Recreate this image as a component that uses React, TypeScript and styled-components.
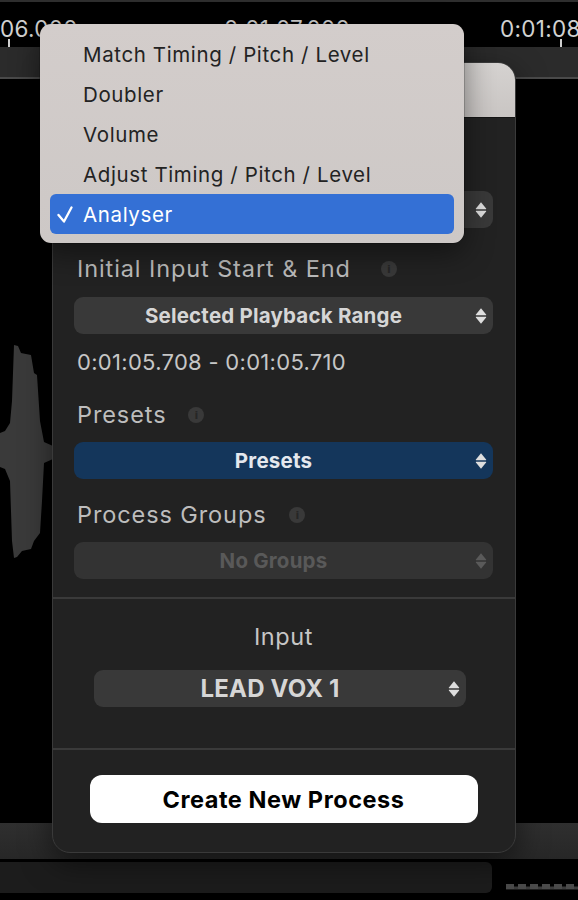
import React from "react";
import styled, { createGlobalStyle } from "styled-components";

const GlobalStyle = createGlobalStyle`
  html, body { margin: 0; padding: 0; background: #000; }
  body { font-family: "Inter", "Liberation Sans", sans-serif; -webkit-font-smoothing: antialiased; }
  * { box-sizing: border-box; }
`;

const Page = styled.div`
  position: relative;
  width: 578px;
  height: 900px;
  overflow: hidden;
  background: #000;
  display: flex;
  flex-direction: column;
`;

const TopLine = styled.div`
  height: 2px;
  background: #2e2e2e;
  flex: none;
`;

const LabelRow = styled.div`
  height: 45px;
  flex: none;
  display: flex;
  margin-left: -52px;
`;

const TimeLabel = styled.div`
  position: relative;
  width: 276px;
  flex: none;
  padding-top: 14px;
  font-size: 22.5px;
  line-height: 26px;
  letter-spacing: 0.3px;
  color: #d2d2d2;
  white-space: nowrap;
  &::after {
    content: "";
    position: absolute;
    left: 60px;
    bottom: 0;
    width: 1.5px;
    height: 8px;
    background: #cfcfcf;
  }
`;

const RulerBand = styled.div`
  height: 30px;
  flex: none;
  background: #2b2b2b;
`;

const RulerLine = styled.div`
  height: 2px;
  flex: none;
  background: #4a4a4a;
`;

const TrackArea = styled.div`
  flex: 1;
  padding-top: 264px;
`;

const BottomBand = styled.div`
  height: 36px;
  flex: none;
  background: linear-gradient(#2f2f2f, #272727);
`;

const BottomRow = styled.div`
  height: 31px;
  flex: none;
  margin-top: 3px;
  margin-bottom: 7px;
  display: flex;
  align-items: flex-end;
`;

const TrackBar = styled.div`
  width: 492px;
  height: 31px;
  background: #1c1c1c;
  border-radius: 0 6px 6px 0;
`;

const Panel = styled.div`
  position: absolute;
  left: 52px;
  top: 62px;
  width: 464px;
  height: 791px;
  border: 1px solid #3a3a3a;
  border-radius: 18px;
  background: #222222;
  overflow: hidden;
  display: flex;
  flex-direction: column;
  box-shadow: 0 10px 30px rgba(0, 0, 0, 0.5);
`;

const PanelHeader = styled.div`
  height: 55px;
  flex: none;
  background: linear-gradient(#d5d2d0, #c9c5c3);
  border-bottom: 1px solid #151515;
`;

const Section = styled.div<{ $pt?: number }>`
  padding: ${(p) => p.$pt ?? 0}px 22px 0 21px;
  display: flex;
  flex-direction: column;
`;

const FieldHeading = styled.div<{ $mt?: number }>`
  display: flex;
  align-items: center;
  margin-top: ${(p) => p.$mt ?? 0}px;
  padding-left: 3px;
  height: 26px;
`;

const Label = styled.span`
  font-size: 23.5px;
  line-height: 26px;
  letter-spacing: 0.9px;
  color: #bdbdbd;
  white-space: nowrap;
`;

const CenterLabel = styled.div<{ $mt?: number }>`
  align-self: center;
  font-size: 23.5px;
  line-height: 26px;
  letter-spacing: 0.6px;
  color: #c6c6c6;
  margin-top: ${(p) => p.$mt ?? 0}px;
`;

const InfoDot = styled.span<{ $gap?: number }>`
  width: 16px;
  height: 16px;
  flex: none;
  border-radius: 50%;
  background: #393939;
  margin-left: ${(p) => p.$gap ?? 23}px;
  display: inline-flex;
  align-items: center;
  justify-content: center;
  font-family: "DejaVu Sans", sans-serif;
  font-weight: 700;
  font-size: 11px;
  line-height: 1;
  color: #262626;
`;

const Select = styled.div<{
  $mt?: number;
  $ml?: number;
  $variant?: "default" | "blue" | "disabled";
  $width?: number;
}>`
  margin-top: ${(p) => p.$mt ?? 0}px;
  margin-left: ${(p) => p.$ml ?? 0}px;
  height: 37px;
  width: ${(p) => (p.$width ? `${p.$width}px` : "auto")};
  border-radius: 9px;
  display: flex;
  align-items: center;
  padding-right: 6px;
  background: ${(p) =>
    p.$variant === "blue" ? "#14365b" : p.$variant === "disabled" ? "#333333" : "#393939"};
  color: ${(p) =>
    p.$variant === "disabled" ? "#595959" : p.$variant === "blue" ? "#e4e8ee" : "#d6d6d6"};
`;

const SelectText = styled.span<{ $size?: number }>`
  flex: 1;
  text-align: center;
  font-weight: 700;
  font-size: ${(p) => p.$size ?? 20.5}px;
  line-height: 26px;
  letter-spacing: 0.2px;
  white-space: nowrap;
`;

const StepperSvg = styled.svg<{ $dim?: boolean }>`
  width: 12px;
  height: 18px;
  margin-left: 2px;
  flex: none;
  fill: ${(p) => (p.$dim ? "#5a5a5a" : "#dedede")};
`;

const TimeText = styled.div<{ $mt?: number }>`
  margin-top: ${(p) => p.$mt ?? 0}px;
  padding-left: 3px;
  font-size: 22px;
  line-height: 24px;
  letter-spacing: 0.3px;
  color: #c6c6c6;
  white-space: nowrap;
`;

const Divider = styled.div<{ $mt?: number }>`
  height: 2px;
  flex: none;
  background: #3a3a3a;
  margin-top: ${(p) => p.$mt ?? 0}px;
`;

const CreateButton = styled.button`
  margin-top: 25px;
  width: 388px;
  height: 48px;
  border: none;
  border-radius: 12px;
  background: #ffffff;
  color: #000;
  font-family: "Inter", "Liberation Sans", sans-serif;
  font-weight: 700;
  font-size: 23.5px;
  letter-spacing: 0.55px;
  align-self: center;
  margin-left: 16px;
  margin-right: 16px;
`;

const Menu = styled.div`
  position: absolute;
  left: 40px;
  top: 24px;
  width: 424px;
  padding: 10px 10px 9px;
  border-radius: 11px;
  background: linear-gradient(#d3cdcb, #cdc8c6);
  box-shadow: 0 0 0 0.5px rgba(0, 0, 0, 0.35), 0 10px 30px rgba(0, 0, 0, 0.45);
  display: flex;
  flex-direction: column;
`;

const MenuItem = styled.div<{ $active?: boolean }>`
  height: 40px;
  border-radius: 6px;
  display: grid;
  grid-template-columns: 33px 1fr;
  align-items: center;
  font-size: 20.5px;
  letter-spacing: 0.62px;
  white-space: nowrap;
  color: ${(p) => (p.$active ? "#ffffff" : "#232323")};
  background: ${(p) => (p.$active ? "#3470d5" : "transparent")};
`;

const CheckSvg = styled.svg`
  width: 16px;
  height: 17px;
  margin-left: 7px;
`;

const Stepper = ({ dim }: { dim?: boolean }) => (
  <StepperSvg viewBox="0 0 12 18" $dim={dim}>
    <path d="M6 1.2 L11.1 7.5 Q11.6 8.2 10.8 8.2 L1.2 8.2 Q0.4 8.2 0.9 7.5 Z" />
    <path d="M6 16.8 L11.1 10.5 Q11.6 9.8 10.8 9.8 L1.2 9.8 Q0.4 9.8 0.9 10.5 Z" />
  </StepperSvg>
);

const Info = ({ gap }: { gap?: number }) => <InfoDot $gap={gap}>i</InfoDot>;

const menuItems = [
  "Match Timing / Pitch / Level",
  "Doubler",
  "Volume",
  "Adjust Timing / Pitch / Level",
  "Analyser",
];

export default function App() {
  return (
    <>
      <GlobalStyle />
      <Page>
        <TopLine />
        <LabelRow>
          <TimeLabel>0:01:06.000</TimeLabel>
          <TimeLabel>0:01:07.000</TimeLabel>
          <TimeLabel>0:01:08.000</TimeLabel>
        </LabelRow>
        <RulerBand />
        <RulerLine />
        <TrackArea>
          <svg width="56" height="218" viewBox="0 342 56 218" style={{ display: "block" }}>
            <path
              fill="#3a3a3a"
              d="M14,344 L18,345 L21,352 L31,354 L34,372 L37,374 L40,420 L44,441 L53,445 L53,458 L44,462 L42,500 L40,532 L34,540 L31,548 L22,550 L17,556 L14,557 L12,540 L10,480 L5,468 L0,466 L0,432 L5,430 L10,422 L12,400 Z"
            />
          </svg>
        </TrackArea>
        <BottomBand />
        <BottomRow>
          <TrackBar />
          <svg width="86" height="31" viewBox="0 0 86 31" style={{ display: "block" }}>
            <path d="M14 26 H86" stroke="#3c3c3c" strokeWidth="3" />
            {[14, 26, 38, 50, 62, 74].map((x) => (
              <rect key={x} x={x} y={22} width={8} height={5} fill="#4a4a4a" />
            ))}
          </svg>
        </BottomRow>

        <Panel>
          <PanelHeader />
          <Section $pt={32}>
            <FieldHeading />
            <Select $mt={15}>
              <SelectText>Analyser</SelectText>
              <Stepper />
            </Select>
            <FieldHeading $mt={28}>
              <Label>Initial Input Start &amp; End</Label>
              <Info gap={30} />
            </FieldHeading>
            <Select $mt={15}>
              <SelectText>Selected Playback Range</SelectText>
              <Stepper />
            </Select>
            <TimeText $mt={16}>0:01:05.708 - 0:01:05.710</TimeText>
            <FieldHeading $mt={28}>
              <Label>Presets</Label>
              <Info gap={22} />
            </FieldHeading>
            <Select $mt={14} $variant="blue">
              <SelectText>Presets</SelectText>
              <Stepper />
            </Select>
            <FieldHeading $mt={23}>
              <Label>Process Groups</Label>
              <Info gap={23} />
            </FieldHeading>
            <Select $mt={14} $variant="disabled">
              <SelectText>No Groups</SelectText>
              <Stepper dim />
            </Select>
          </Section>
          <Divider $mt={18} />
          <Section>
            <CenterLabel $mt={25}>Input</CenterLabel>
            <Select $mt={20} $ml={20} $width={372}>
              <SelectText $size={24}>LEAD VOX 1</SelectText>
              <Stepper />
            </Select>
          </Section>
          <Divider $mt={41} />
          <Section>
            <CreateButton>Create New Process</CreateButton>
          </Section>
        </Panel>

        <Menu>
          {menuItems.map((item) => {
            const active = item === "Analyser";
            return (
              <MenuItem key={item} $active={active}>
                {active ? (
                  <CheckSvg viewBox="0 0 16 17">
                    <path
                      d="M1.5 9 L7 15.5 L14.5 1.5"
                      fill="none"
                      stroke="#fff"
                      strokeWidth="2.3"
                      strokeLinecap="round"
                      strokeLinejoin="round"
                    />
                  </CheckSvg>
                ) : (
                  <span />
                )}
                <span>{item}</span>
              </MenuItem>
            );
          })}
        </Menu>
      </Page>
    </>
  );
}
